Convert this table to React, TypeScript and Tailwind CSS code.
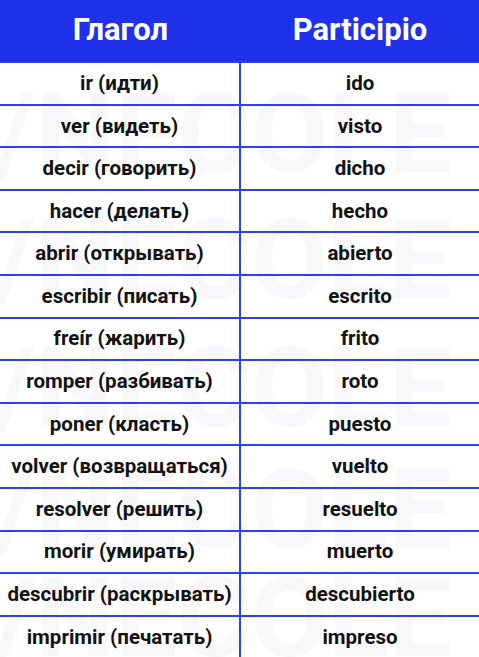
import React from 'react';

const rows: [string, string][] = [
  ['ir (идти)', 'ido'],
  ['ver (видеть)', 'visto'],
  ['decir (говорить)', 'dicho'],
  ['hacer (делать)', 'hecho'],
  ['abrir (открывать)', 'abierto'],
  ['escribir (писать)', 'escrito'],
  ['freír (жарить)', 'frito'],
  ['romper (разбивать)', 'roto'],
  ['poner (класть)', 'puesto'],
  ['volver (возвращаться)', 'vuelto'],
  ['resolver (решить)', 'resuelto'],
  ['morir (умирать)', 'muerto'],
  ['descubrir (раскрывать)', 'descubierto'],
  ['imprimir (печатать)', 'impreso'],
];

// faint watermark bands behind the table
const marks = [78, 204, 332, 454, 562];

const App: React.FC = () => {
  return (
    <div
      className="relative w-[479px] h-[657px] overflow-hidden bg-white"
      style={{ fontFamily: 'Roboto, "Noto Sans", sans-serif' }}
    >
      <div aria-hidden className="absolute inset-0 pointer-events-none select-none">
        {marks.map((top) => (
          <div
            key={top}
            className="absolute left-[-6px] text-[112px] leading-none font-bold text-[#f8f8fa] whitespace-nowrap"
            style={{ top }}
          >
            /NECOLE
          </div>
        ))}
      </div>

      <div className="relative">
        <div className="grid grid-cols-[241px_1fr] h-[61px] bg-[#1f32ea] text-white text-[31px] font-bold">
          <div className="flex items-center justify-center">Глагол</div>
          <div className="flex items-center justify-center">Participio</div>
        </div>

        {rows.map(([verb, part]) => (
          <div
            key={verb}
            className="grid grid-cols-[241px_1fr] h-[42.6px] border-t-2 border-[#2b40f0] text-[20.5px] font-bold text-[#121212]"
          >
            <div className="flex items-center justify-center border-r-2 border-[#2b40f0] whitespace-nowrap">
              {verb}
            </div>
            <div className="flex items-center justify-center">{part}</div>
          </div>
        ))}
      </div>
    </div>
  );
};

export default App;
